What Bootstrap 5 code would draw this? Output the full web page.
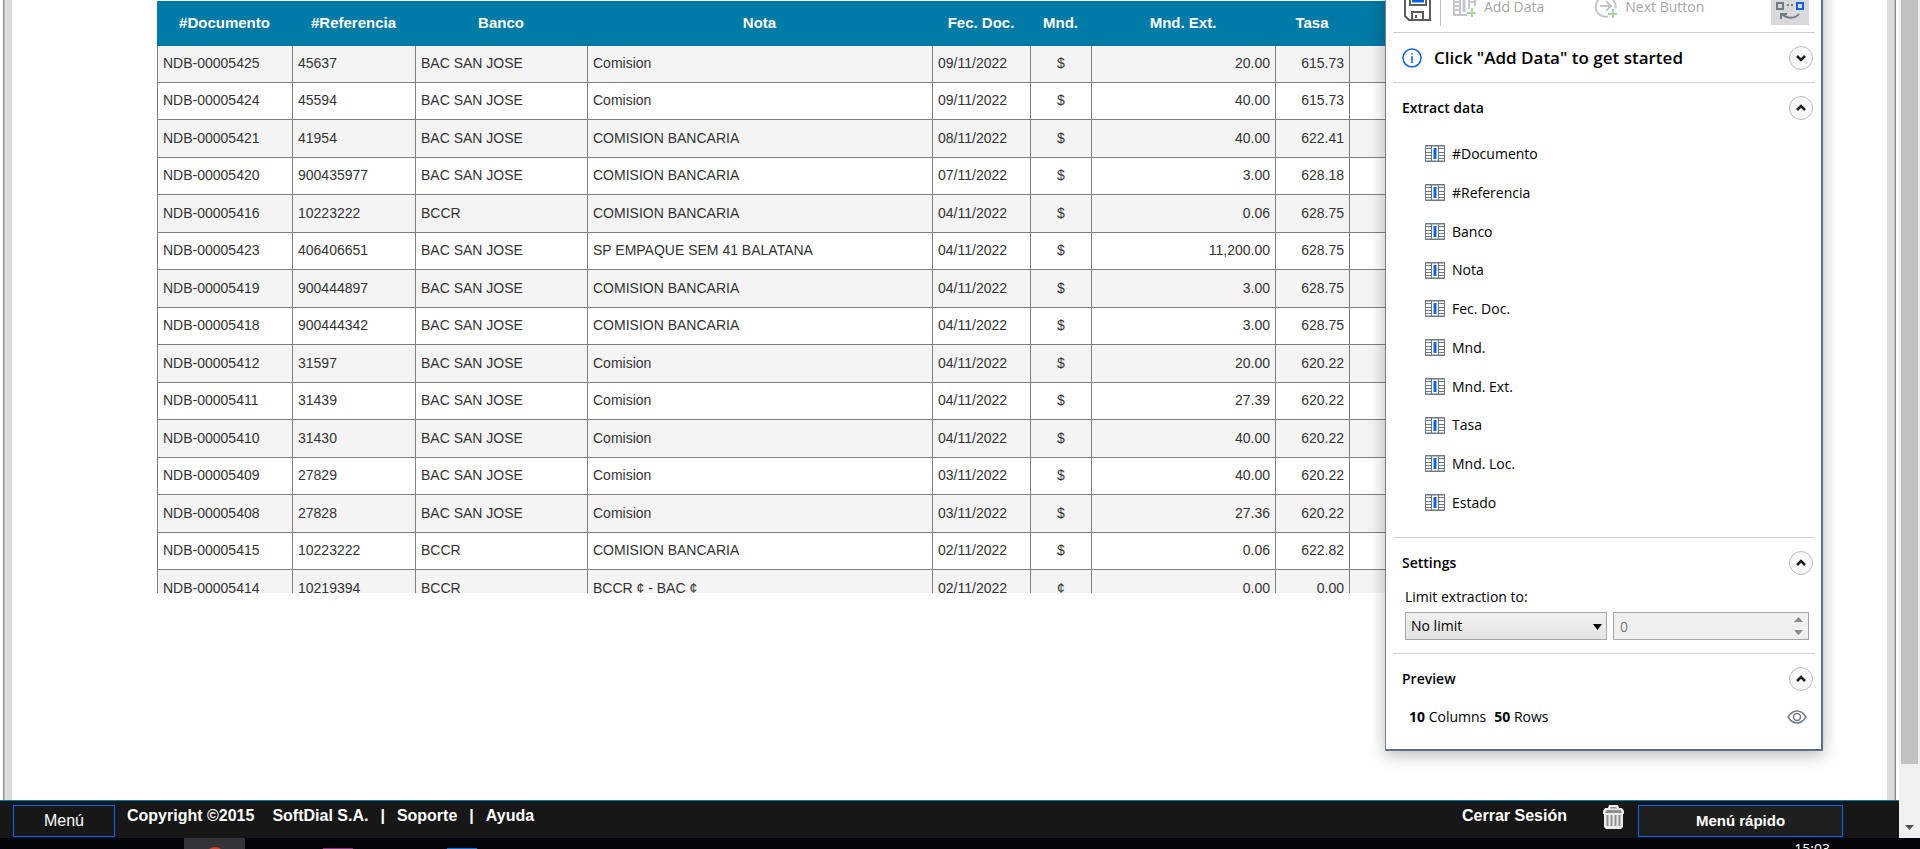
<!DOCTYPE html>
<html lang="es">
<head>
<meta charset="utf-8">
<meta name="viewport" content="width=device-width, initial-scale=1">
<title>SoftDial - Notas de débito</title>
<link href="https://cdn.jsdelivr.net/npm/bootstrap@5.3.0/dist/css/bootstrap.min.css" rel="stylesheet">
<style>
body { font-family: "Liberation Sans", Arial, sans-serif; font-size: 16px; line-height: 20px; color: #333; background: #fff; }
.edge { width: 9px; background: #dcdcdc; }
.edge-l { margin-left: 3px; border-left: 1px solid #8c8c8c; box-shadow: inset 1px 0 #bdbdbd; }
.edge-r { margin-right: 3px; border-right: 1px solid #8c8c8c; box-shadow: inset -1px 0 #bdbdbd; }
.sheet { padding: 1px 145px 0; }
.grid-view { height: 592px; }
.notes { table-layout: fixed; border-collapse: separate; border-spacing: 0; font-size: 14px; line-height: 18px; width: 100%; }
.notes th { height: 45px; padding: 0 5px 2px; background: #007aa6; color: #fff; font-size: 15px; text-align: center; white-space: nowrap; }
.notes td { height: 37px; padding: 0 5px 2px; border-left: 1px solid #808080; border-bottom: 1px solid #808080; white-space: nowrap; }
.notes tbody tr:nth-child(odd) td { background: #f4f4f4; height: 38px; }
.notes tbody tr:first-child td { height: 37px; }
.c-doc { width: 135px; } .c-ref { width: 123px; } .c-ban { width: 172px; } .c-nota { width: 345px; }
.c-fec { width: 98px; } .c-mnd { width: 61px; } .c-ext { width: 184px; } .c-tasa { width: 74px; }

.extractor { top: -19px; right: 76px; width: 438px; padding: 0 6px 0 7px; background: #fff; border: 1px solid #7b8188; border-right: 2px solid #5b6f88; border-bottom: 2px solid #5b6f88; box-shadow: 0 4px 16px rgba(0,0,0,.28); font-family: "Open Sans", "Noto Sans", sans-serif; font-size: 14px; color: #000; }
.extractor section, .tools { border-bottom: 1px solid #d0d0d0; }
.extractor section:last-child { border-bottom: 0; }
.tools { height: 51px; padding: 0 6px 0 10px; }
.tool { border: 0; background: none; padding: 0; color: #a6a6a6; gap: 7px; }
.tool-sep { width: 1px; height: 38px; background: #bfbfbf; margin: 0 12px 0 9px; }
.tool-next { margin-left: 50px; }
.tool-on { width: 38px; height: 36px; background: #d9d9d9; }
.head { height: 49px; padding: 0 2px 0 9px; }
.head h2 { font-size: 14px; line-height: 20px; font-weight: 600; margin: 0; }
.head .lead-title { font-size: 17px; line-height: 24px; margin-left: 12px; }
.fold { width: 24px; height: 24px; padding: 0; border: 1px solid #bdbdbd; border-radius: 50%; background: #f7f7f7; }
.fields { padding: 2px 0 15px 32px; margin: 0; list-style: none; }
.fields li { height: 39px; gap: 7px; }
.fields li:nth-child(4n) { height: 38px; }
.limits { padding: 0 6px 13px 12px; }
.limits label { height: 25px; line-height: 20px; }
.pick-box { margin-right: 6px; }
.pick, .amount { height: 28px; border: 1px solid #a6a6a6; border-radius: 0; font-size: 14px; }
.pick { width: 202px; appearance: none; color: #000; background: linear-gradient(#f0f0f0, #e4e4e4); padding: 0 5px; }
.pick-arrow { right: 5px; top: 12px; pointer-events: none; }
.amount { width: 100%; background: #efefef; color: #777; padding: 0 6px; }
.spin { right: 6px; top: 5px; }
.counts { height: 28px; padding: 0 8px 0 16px; margin-bottom: 18px; }
.counts p { gap: 8px; }

.rail { width: 21px; background: #f0f0f0; }
.rail-thumb { width: 17px; height: 764px; background: #c1c1c1; }
.foot { background: #171717; border-top: 1px solid #007aa6; height: 38px; padding: 4px 56px 0 13px; color: #fff; font-weight: 700; }
.foot a { color: #fff; text-decoration: none; }
.foot-btn { height: 32px; border: 1px solid #06f; color: #fff; background: none; padding: 0; }
.foot-menu { width: 102px; margin-right: 12px; }
.foot-quick { width: 205px; background: #1f1f1f; font-size: 15px; font-weight: 700; margin-left: 14px; }
.foot-line { line-height: 22px; }
.foot-owner { margin-left: 18px; }
.foot-bar { padding: 0 12px; }
.foot-out { margin-right: 36px; }
.taskbar { height: 11px; background: #02040a; overflow: hidden; padding-left: 184px; }
.task { width: 61px; height: 11px; background: #333438; }
.clock { color: #fff; font: 14px/22px "Open Sans", sans-serif; margin-right: 90px; }
</style>
</head>
<body>
<div class="d-flex flex-column vh-100 overflow-hidden">
  <div class="d-flex flex-grow-1 overflow-hidden">
    <div class="d-flex flex-column flex-grow-1 overflow-hidden">
      <main class="d-flex flex-grow-1 position-relative overflow-hidden">
        <div class="edge edge-l flex-shrink-0"></div>
        <div class="sheet flex-grow-1 overflow-hidden">
          <div class="grid-view overflow-hidden">
            <table class="notes">
              <colgroup><col class="c-doc"><col class="c-ref"><col class="c-ban"><col class="c-nota"><col class="c-fec"><col class="c-mnd"><col class="c-ext"><col class="c-tasa"><col></colgroup>
              <thead><tr><th>#Documento</th><th>#Referencia</th><th>Banco</th><th>Nota</th><th>Fec. Doc.</th><th>Mnd.</th><th>Mnd. Ext.</th><th>Tasa</th><th></th></tr></thead>
              <tbody>
                <tr><td>NDB-00005425</td><td>45637</td><td>BAC SAN JOSE</td><td>Comision</td><td>09/11/2022</td><td class="text-center">$</td><td class="text-end">20.00</td><td class="text-end">615.73</td><td></td></tr>
                <tr><td>NDB-00005424</td><td>45594</td><td>BAC SAN JOSE</td><td>Comision</td><td>09/11/2022</td><td class="text-center">$</td><td class="text-end">40.00</td><td class="text-end">615.73</td><td></td></tr>
                <tr><td>NDB-00005421</td><td>41954</td><td>BAC SAN JOSE</td><td>COMISION BANCARIA</td><td>08/11/2022</td><td class="text-center">$</td><td class="text-end">40.00</td><td class="text-end">622.41</td><td></td></tr>
                <tr><td>NDB-00005420</td><td>900435977</td><td>BAC SAN JOSE</td><td>COMISION BANCARIA</td><td>07/11/2022</td><td class="text-center">$</td><td class="text-end">3.00</td><td class="text-end">628.18</td><td></td></tr>
                <tr><td>NDB-00005416</td><td>10223222</td><td>BCCR</td><td>COMISION BANCARIA</td><td>04/11/2022</td><td class="text-center">$</td><td class="text-end">0.06</td><td class="text-end">628.75</td><td></td></tr>
                <tr><td>NDB-00005423</td><td>406406651</td><td>BAC SAN JOSE</td><td>SP EMPAQUE SEM 41 BALATANA</td><td>04/11/2022</td><td class="text-center">$</td><td class="text-end">11,200.00</td><td class="text-end">628.75</td><td></td></tr>
                <tr><td>NDB-00005419</td><td>900444897</td><td>BAC SAN JOSE</td><td>COMISION BANCARIA</td><td>04/11/2022</td><td class="text-center">$</td><td class="text-end">3.00</td><td class="text-end">628.75</td><td></td></tr>
                <tr><td>NDB-00005418</td><td>900444342</td><td>BAC SAN JOSE</td><td>COMISION BANCARIA</td><td>04/11/2022</td><td class="text-center">$</td><td class="text-end">3.00</td><td class="text-end">628.75</td><td></td></tr>
                <tr><td>NDB-00005412</td><td>31597</td><td>BAC SAN JOSE</td><td>Comision</td><td>04/11/2022</td><td class="text-center">$</td><td class="text-end">20.00</td><td class="text-end">620.22</td><td></td></tr>
                <tr><td>NDB-00005411</td><td>31439</td><td>BAC SAN JOSE</td><td>Comision</td><td>04/11/2022</td><td class="text-center">$</td><td class="text-end">27.39</td><td class="text-end">620.22</td><td></td></tr>
                <tr><td>NDB-00005410</td><td>31430</td><td>BAC SAN JOSE</td><td>Comision</td><td>04/11/2022</td><td class="text-center">$</td><td class="text-end">40.00</td><td class="text-end">620.22</td><td></td></tr>
                <tr><td>NDB-00005409</td><td>27829</td><td>BAC SAN JOSE</td><td>Comision</td><td>03/11/2022</td><td class="text-center">$</td><td class="text-end">40.00</td><td class="text-end">620.22</td><td></td></tr>
                <tr><td>NDB-00005408</td><td>27828</td><td>BAC SAN JOSE</td><td>Comision</td><td>03/11/2022</td><td class="text-center">$</td><td class="text-end">27.36</td><td class="text-end">620.22</td><td></td></tr>
                <tr><td>NDB-00005415</td><td>10223222</td><td>BCCR</td><td>COMISION BANCARIA</td><td>02/11/2022</td><td class="text-center">$</td><td class="text-end">0.06</td><td class="text-end">622.82</td><td></td></tr>
                <tr><td>NDB-00005414</td><td>10219394</td><td>BCCR</td><td>BCCR ¢ - BAC ¢</td><td>02/11/2022</td><td class="text-center">¢</td><td class="text-end">0.00</td><td class="text-end">0.00</td><td></td></tr>
              </tbody>
            </table>
          </div>
        </div>
        <div class="edge edge-r flex-shrink-0"></div>

        <aside class="extractor position-absolute">
          <div class="tools d-flex align-items-center">
            <button class="tool" type="button" aria-label="Save"><svg class="d-block" width="28" height="28" viewBox="0 0 28 28" fill="none" stroke="#5c5c5c" stroke-width="2"><path d="M2 1h25v26H6l-4-4z"/><path d="M7 1v11h16V1"/><path d="M9 27v-8h11v8M13 22v3"/><path d="M9 8h12" stroke="#0a62d9" stroke-width="3"/></svg></button>
            <div class="tool-sep"></div>
            <button class="tool d-flex align-items-center" type="button" disabled><svg width="24" height="22" viewBox="0 0 24 22" fill="none" stroke="#c3c6cb" stroke-width="2"><path d="M1 1h6v18H1zM1 6h6M1 10h6M1 14h6M16 1h6v9M16 6h6M16 1v12"/><path d="M7 19h7M7 1h9"/><path d="M11 4v12" stroke-width="3"/><path d="M19 12v9M14 17h9" stroke="#a9d79c"/></svg>Add Data</button>
            <button class="tool tool-next d-flex align-items-center" type="button" disabled><svg width="24" height="24" viewBox="0 0 24 24" fill="none" stroke="#c3c6cb" stroke-width="2"><path d="M14 21.500a10 10 0 1 1 7.500-8"/><path d="M6 11h11M12 6l5 5-5 5"/><path d="M19 14v9M14 19h9" stroke="#a9d79c"/></svg>Next Button</button>
            <button class="tool tool-on ms-auto d-flex align-items-center justify-content-center" type="button" aria-label="Flow view"><svg width="30" height="24" viewBox="0 0 30 24" fill="none" stroke="#6f7b87" stroke-width="2"><path d="M2 8h6v6H2z"/><path d="M12 10h2M16 10h2"/><path d="M22 8h6v6h-6z" stroke="#0a66e0"/><path d="M24 19c-4 5-12 5-17 0M12 19H6v5"/></svg></button>
          </div>
          <section>
            <div class="head d-flex align-items-center">
              <svg width="20" height="20" viewBox="0 0 20 20" fill="none" stroke="#0a66e0"><circle cx="10" cy="10" r="9" stroke-width="1.500"/><path d="M10 8v7M10 5v1.500" stroke-width="1.500"/></svg>
              <h2 class="lead-title">Click "Add Data" to get started</h2>
              <button class="fold ms-auto" type="button" aria-label="Expand"><svg class="d-block mx-auto" width="12" height="12" viewBox="0 0 12 12" fill="none" stroke="#222" stroke-width="2.500"><path d="M2 4l4 4 4-4"/></svg></button>
            </div>
          </section>
          <section>
            <div class="head d-flex align-items-center"><h2>Extract data</h2><button class="fold ms-auto" type="button" aria-label="Collapse extract data"><svg class="d-block mx-auto" width="12" height="12" viewBox="0 0 12 12" fill="none" stroke="#222" stroke-width="2.500"><path d="M2 8l4-4 4 4"/></svg></button></div>
            <svg width="0" height="0" class="position-absolute"><defs><symbol id="colico" viewBox="0 0 20 17"><path fill="#fff" stroke="#6c7883" d="M.5.5h19v16H.5z"/><path d="M0 3.500h6M0 7.500h6M0 10.500h6M0 13.500h6M14 3.500h6M14 7.500h6M14 10.500h6M14 13.500h6M6.500 0v17M13.500 0v17M0 1h20M0 16h20" stroke="#6c7883" fill="none"/><path fill="#0a66e0" d="M8.500 3h3v11h-3z"/></symbol></defs></svg>
            <ul class="fields">
              <li class="d-flex align-items-center"><svg width="20" height="17"><use href="#colico"/></svg>#Documento</li>
              <li class="d-flex align-items-center"><svg width="20" height="17"><use href="#colico"/></svg>#Referencia</li>
              <li class="d-flex align-items-center"><svg width="20" height="17"><use href="#colico"/></svg>Banco</li>
              <li class="d-flex align-items-center"><svg width="20" height="17"><use href="#colico"/></svg>Nota</li>
              <li class="d-flex align-items-center"><svg width="20" height="17"><use href="#colico"/></svg>Fec. Doc.</li>
              <li class="d-flex align-items-center"><svg width="20" height="17"><use href="#colico"/></svg>Mnd.</li>
              <li class="d-flex align-items-center"><svg width="20" height="17"><use href="#colico"/></svg>Mnd. Ext.</li>
              <li class="d-flex align-items-center"><svg width="20" height="17"><use href="#colico"/></svg>Tasa</li>
              <li class="d-flex align-items-center"><svg width="20" height="17"><use href="#colico"/></svg>Mnd. Loc.</li>
              <li class="d-flex align-items-center"><svg width="20" height="17"><use href="#colico"/></svg>Estado</li>
            </ul>
          </section>
          <section>
            <div class="head d-flex align-items-center"><h2>Settings</h2><button class="fold ms-auto" type="button" aria-label="Collapse settings"><svg class="d-block mx-auto" width="12" height="12" viewBox="0 0 12 12" fill="none" stroke="#222" stroke-width="2.500"><path d="M2 8l4-4 4 4"/></svg></button></div>
            <div class="limits">
              <label class="d-block" for="limit">Limit extraction to:</label>
              <div class="d-flex">
                <div class="pick-box position-relative flex-shrink-0"><select class="pick d-block" id="limit"><option>No limit</option></select><svg class="pick-arrow position-absolute" width="9" height="6" viewBox="0 0 9 6"><path d="M0 0h9L4.500 6z"/></svg></div>
                <div class="position-relative flex-grow-1"><input class="amount d-block" type="text" value="0" aria-label="Row limit" disabled><svg class="spin position-absolute" width="9" height="18" viewBox="0 0 9 18" fill="#8a8a8a"><path d="M0 5l4.500-5L9 5zM0 13l4.500 5L9 13z"/></svg></div>
              </div>
            </div>
          </section>
          <section>
            <div class="head d-flex align-items-center"><h2>Preview</h2><button class="fold ms-auto" type="button" aria-label="Collapse preview"><svg class="d-block mx-auto" width="12" height="12" viewBox="0 0 12 12" fill="none" stroke="#222" stroke-width="2.500"><path d="M2 8l4-4 4 4"/></svg></button></div>
            <div class="counts d-flex align-items-center">
              <p class="d-flex m-0"><span><b>10</b> Columns</span><span><b>50</b> Rows</span></p>
              <svg class="ms-auto" width="20" height="14" viewBox="0 0 20 14" fill="none" stroke="#6f7b87" stroke-width="1.500"><path d="M1 7c5-8 13-8 18 0-5 8-13 8-18 0z"/><circle cx="10" cy="7" r="3.500"/></svg>
            </div>
          </section>
        </aside>
      </main>
      <footer class="foot d-flex align-items-start flex-shrink-0">
        <button class="foot-btn foot-menu" type="button">Menú</button>
        <div class="foot-line d-flex"><span>Copyright ©2015</span><span class="foot-owner">SoftDial S.A.</span><span class="foot-bar">|</span><a href="#">Soporte</a><span class="foot-bar">|</span><a href="#">Ayuda</a></div>
        <a class="foot-line foot-out ms-auto" href="#">Cerrar Sesión</a>
        <svg width="21" height="24" viewBox="0 0 21 24"><path d="M6 0h9l1 3h3l2 3v3h-1v13l-2 2H3l-2-2V9H0V6l2-3h3z" fill="#ececec"/><path d="M7.500 2h6v1.500h-6zM2 8l1.500-3h14L19 8z" fill="#8f8f8f"/><path d="M4.500 10v11M8.500 10v11M12.500 10v11M16.500 10v11" stroke="#8f8f8f" stroke-width="2"/></svg>
        <button class="foot-btn foot-quick" type="button">Menú rápido</button>
      </footer>
    </div>
    <div class="rail d-flex flex-column align-items-center flex-shrink-0">
      <div class="rail-thumb"></div>
      <svg class="mt-auto mb-2" width="9" height="5" viewBox="0 0 9 5"><path d="M0 0h9L4.500 5z" fill="#505050"/></svg>
    </div>
  </div>
  <div class="taskbar d-flex flex-shrink-0">
    <div class="task"><svg class="d-block mx-auto" width="20" height="11"><circle cx="10" cy="19" r="10" fill="#d8452f"/></svg></div>
    <svg width="240" height="11"><path d="M78 10h30v1H78z" fill="#8a2f86"/><path d="M202 10h30v1h-30z" fill="#0a74d6"/></svg>
    <span class="clock ms-auto">15:03</span>
  </div>
</div>
<script src="https://cdn.jsdelivr.net/npm/bootstrap@5.3.0/dist/js/bootstrap.bundle.min.js"></script>
</body>
</html>
